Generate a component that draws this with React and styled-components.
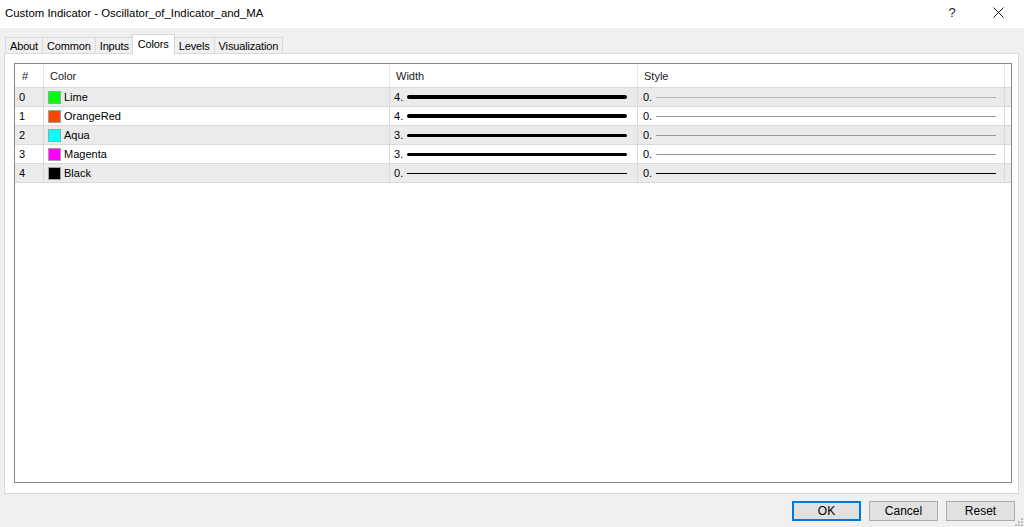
import React from 'react';
import styled, { createGlobalStyle } from 'styled-components';

const GlobalStyle = createGlobalStyle`
  html, body, #root {
    margin: 0;
    height: 100%;
  }
  body {
    font-family: "Liberation Sans", Arial, sans-serif;
    font-size: 11px;
    color: #000;
    background: #f0f0f0;
    overflow: hidden;
  }
`;

const buffers = [
  { id: 0, name: 'Lime', swatch: '#00ff00', width: 4, styleColor: '#b4b4b4' },
  { id: 1, name: 'OrangeRed', swatch: '#ff4500', width: 4, styleColor: '#9a9a9a' },
  { id: 2, name: 'Aqua', swatch: '#00ffff', width: 3, styleColor: '#9a9a9a' },
  { id: 3, name: 'Magenta', swatch: '#ff00ff', width: 3, styleColor: '#9a9a9a' },
  { id: 4, name: 'Black', swatch: '#000000', width: 0, styleColor: '#000000' },
];

const tabs = ['About', 'Common', 'Inputs', 'Colors', 'Levels', 'Visualization'];

const App = () => {
  return (
    <>
      <GlobalStyle />
      <Window>
        <TitleBar>
          <Title>Custom Indicator - Oscillator_of_Indicator_and_MA</Title>
          <TitleButtons>
            <HelpButton>?</HelpButton>
            <CloseButton>
              <svg width="11" height="11" viewBox="0 0 11 11">
                <path d="M0.5 0.5 L10.5 10.5 M10.5 0.5 L0.5 10.5" stroke="#1a1a1a" strokeWidth="1" />
              </svg>
            </CloseButton>
          </TitleButtons>
        </TitleBar>

        <TabBar>
          {tabs.map((t) => (
            <Tab key={t} $active={t === 'Colors'}>{t}</Tab>
          ))}
        </TabBar>

        <Panel>
          <ListView>
            <HeaderRow>
              <HeaderCell>#</HeaderCell>
              <HeaderCell>Color</HeaderCell>
              <HeaderCell>Width</HeaderCell>
              <HeaderCell>Style</HeaderCell>
              <HeaderCell />
            </HeaderRow>
            {buffers.map((b) => (
              <Row key={b.id} $odd={b.id % 2 === 1}>
                <Cell>{b.id}</Cell>
                <Cell>
                  <Swatch $color={b.swatch} />
                  <span>{b.name}</span>
                </Cell>
                <Cell>
                  <span>{b.width}.</span>
                  <WidthLine $thick={Math.max(b.width, 1)} />
                </Cell>
                <Cell $pad={5}>
                  <span>0.</span>
                  <StyleLine $color={b.styleColor} />
                </Cell>
                <Cell />
              </Row>
            ))}
          </ListView>
        </Panel>

        <Footer>
          <Button $default>OK</Button>
          <Button>Cancel</Button>
          <Button>Reset</Button>
          <Grip>
            <svg width="8" height="8" viewBox="0 0 8 8">
              <rect x="6" y="0" width="2" height="2" fill="#bcbcbc" />
              <rect x="3" y="3" width="2" height="2" fill="#bcbcbc" />
              <rect x="6" y="3" width="2" height="2" fill="#bcbcbc" />
              <rect x="0" y="6" width="2" height="2" fill="#bcbcbc" />
              <rect x="3" y="6" width="2" height="2" fill="#bcbcbc" />
              <rect x="6" y="6" width="2" height="2" fill="#bcbcbc" />
            </svg>
          </Grip>
        </Footer>
      </Window>
    </>
  );
};

export default App;

const Window = styled.div`
  height: 100%;
  display: flex;
  flex-direction: column;
  background: #f0f0f0;
`;

const TitleBar = styled.div`
  height: 28px;
  flex: none;
  background: #fff;
  display: flex;
  align-items: center;
  justify-content: space-between;
  padding-left: 5px;
`;

const Title = styled.div`
  font-size: 11.4px;
  color: #000;
  margin-top: -3px;
`;

const TitleButtons = styled.div`
  display: flex;
  align-items: center;
  height: 100%;
  margin-top: -3px;
`;

const HelpButton = styled.div`
  width: 46px;
  text-align: center;
  font-size: 13px;
  color: #1a1a1a;
`;

const CloseButton = styled.div`
  width: 46px;
  display: flex;
  justify-content: center;
  align-items: center;
  margin-right: 3px;
`;

const TabBar = styled.div`
  height: 26px;
  flex: none;
  display: flex;
  align-items: flex-end;
  padding-left: 5px;
  position: relative;
  z-index: 1;
`;

const Tab = styled.div`
  height: ${(p) => (p.$active ? '21px' : '17px')};
  line-height: ${(p) => (p.$active ? '18px' : '17px')};
  padding: 0 ${(p) => (p.$active ? '5px' : '4px')};
  margin: ${(p) => (p.$active ? '0 -1px -1px -1px' : '0')};
  background: ${(p) => (p.$active ? '#fff' : '#f0f0f0')};
  border: 1px solid #d9d9d9;
  border-bottom: ${(p) => (p.$active ? 'none' : '1px solid #d9d9d9')};
  border-right: ${(p) => (p.$active ? '1px solid #d9d9d9' : 'none')};
  box-sizing: border-box;
  letter-spacing: -0.15px;
  position: relative;
  z-index: ${(p) => (p.$active ? 2 : 0)};

  &:last-child {
    border-right: 1px solid #d9d9d9;
  }
`;

const Panel = styled.div`
  flex: 1;
  min-height: 0;
  margin: -1px 5px 0 4px;
  background: #fff;
  border: 1px solid #d9d9d9;
  padding: 9px 9px 10px 9px;
  display: flex;
`;

const ListView = styled.div`
  flex: 1;
  border: 1px solid #828790;
  background: #fff;
  display: flex;
  flex-direction: column;
`;

const columns = '29px 346px 248px 367px 1fr';

const HeaderRow = styled.div`
  display: grid;
  grid-template-columns: ${columns};
  height: 23px;
  flex: none;
  background: #fff;
`;

const HeaderCell = styled.div`
  display: flex;
  align-items: center;
  padding-left: 6px;
  border-right: 1px solid #e5e5e5;
  color: #1a1a1a;

  &:first-child {
    padding-left: 7px;
  }
  &:last-child {
    border-right: none;
  }
`;

const Row = styled.div`
  display: grid;
  grid-template-columns: ${columns};
  height: 19px;
  flex: none;
  box-sizing: border-box;
  background: ${(p) => (p.$odd ? '#fff' : '#ebebeb')};
  border-top: 1px solid #dadada;

  &:last-child {
    height: 20px;
    border-bottom: 1px solid #dadada;
  }
`;

const Cell = styled.div`
  display: flex;
  align-items: center;
  padding-left: ${(p) => p.$pad || 4}px;
  border-right: 1px solid #dadada;
  overflow: hidden;

  &:last-child {
    border-right: none;
  }
`;

const Swatch = styled.span`
  width: 11px;
  height: 11px;
  flex: none;
  background: ${(p) => p.$color};
  border: 1px solid #a0a0a0;
  margin-right: 3px;
`;

const WidthLine = styled.span`
  flex: 1;
  height: ${(p) => p.$thick}px;
  background: #000;
  border-radius: ${(p) => (p.$thick > 1 ? '2px' : '0')};
  margin: 0 10px 0 4px;
`;

const StyleLine = styled.span`
  flex: 1;
  height: 1px;
  background: ${(p) => p.$color};
  margin: 0 8px 0 4px;
`;

const Footer = styled.div`
  height: 33px;
  flex: none;
  display: flex;
  justify-content: flex-end;
  align-items: center;
  gap: 8px;
  padding-right: 9px;
  position: relative;
`;

const Button = styled.div`
  width: 69px;
  height: 20px;
  box-sizing: border-box;
  display: flex;
  align-items: center;
  justify-content: center;
  background: #e1e1e1;
  border: 1px solid ${(p) => (p.$default ? '#0078d7' : '#adadad')};
  box-shadow: ${(p) => (p.$default ? 'inset 0 0 0 1px #0078d7' : 'none')};
  font-size: 12px;
  color: #000;
`;

const Grip = styled.div`
  position: absolute;
  right: 1px;
  bottom: 1px;
  display: flex;
`;
